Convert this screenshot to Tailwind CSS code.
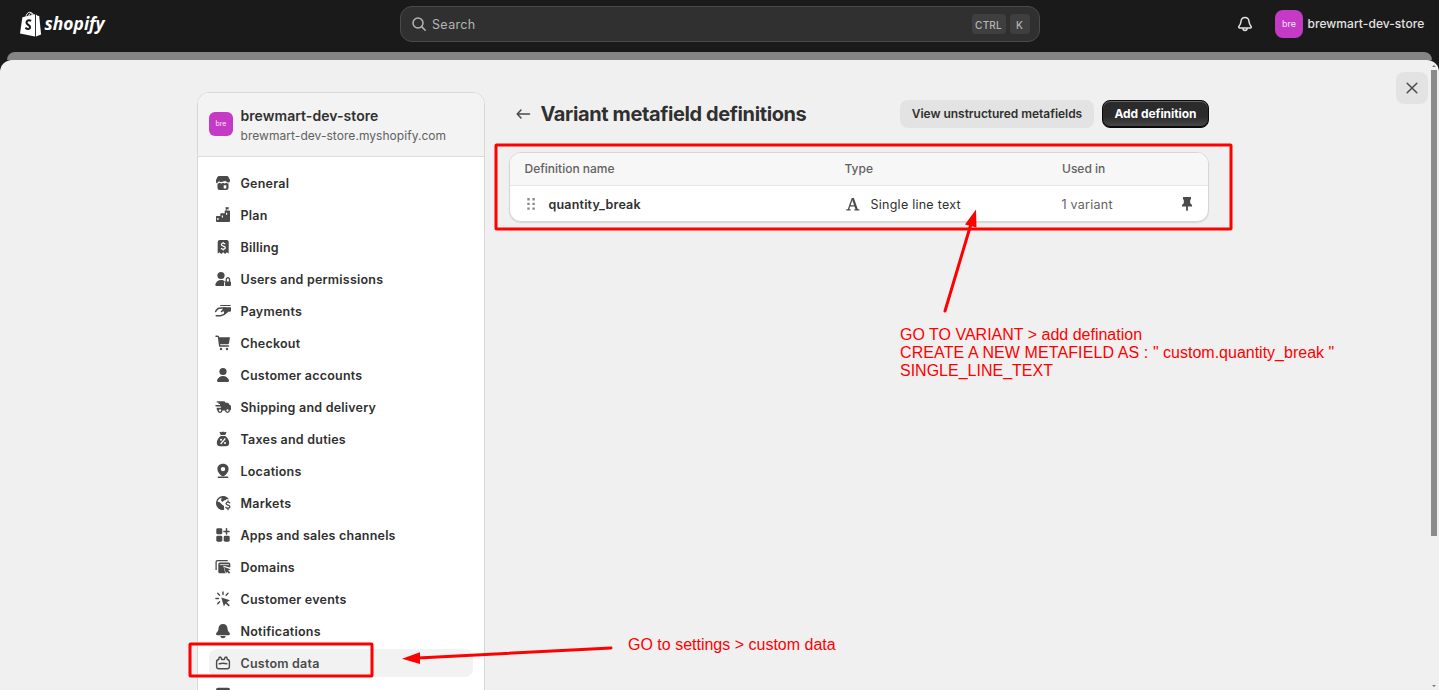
<!DOCTYPE html>
<html lang="en">
<head>
<meta charset="utf-8">
<title>Settings</title>
<script src="https://cdn.jsdelivr.net/npm/@tailwindcss/browser@4"></script>
</head>
<body class="relative flex h-[690px] w-[1439px] flex-col overflow-hidden bg-[#1a1a1a] font-['Inter',sans-serif] text-[13px] text-[#303030]">

<header class="flex h-[52px] shrink-0 items-center justify-between pt-0 pr-[15px] pb-1 pl-5">
  <svg class="h-[26px] w-[90px] overflow-visible" viewBox="0 0 90 26">
    <path fill="#fff" d="M2.400 6.300 15 3.200v22.400L0 22.600zM15.900 3.300l1.600 1.500 1.700.2 1.900 18.600-5.200 1.900z"/>
    <path d="M5.800 6.800C6 3.600 7.700 1.200 9.700 1.200c1.700 0 2.700 2 2.700 4.700M8.400 5.800C9 3.200 10.400 1.700 11.600 1.900c1.100.2 1.800 1.500 2 3.200" fill="none" stroke="#fff" stroke-width="1"/>
    <path d="M11.100 9.800c-2.400-1.200-4.600-.2-4.600 1.700 0 2.400 3.600 2.400 3.600 4.800 0 1.900-2.400 2.200-4.700.6" fill="none" stroke="#1a1a1a" stroke-width="2.100"/>
    <text x="24.600" y="19" textLength="60" lengthAdjust="spacingAndGlyphs" fill="#fff" font-family="Open Sans" font-size="18.500" font-style="italic" font-weight="700">shopify</text>
  </svg>
  <div class="ml-[92px] flex h-9 w-[640px] items-center rounded-xl border border-[#4a4a4a] bg-[#303030] pr-[9px] pl-[11px] text-[#b5b5b5]">
    <svg class="mr-[6.5px] size-[14px]" viewBox="0 0 14 14" fill="none" stroke="#b5b5b5" stroke-width="1.500"><circle cx="6" cy="6" r="5"/><path d="m9.600 9.600 3.600 3.600" stroke-linecap="round"/></svg>
    <span class="flex-1 pt-[3px] text-[12.5px] tracking-[0.350px]">Search</span>
    <kbd class="mr-1 flex h-5 w-[34px] items-center justify-center rounded bg-[#3f3f3f] pt-[2px] font-['Inter',sans-serif] text-[10px] font-medium tracking-[0.200px]">CTRL</kbd>
    <kbd class="flex h-5 w-5 items-center justify-center rounded bg-[#3f3f3f] pt-[2px] font-['Inter',sans-serif] text-[10px] font-medium">K</kbd>
  </div>
  <div class="flex items-center">
    <svg class="mr-[22px] size-4" viewBox="0 0 16 16" fill="none" stroke="#e3e3e3" stroke-width="1.500" stroke-linejoin="round"><path d="M8 1.500C5.500 1.500 4.200 3.200 4 5.500 3.800 8 3.300 8.600 2 10.200c-.6.9-.2 1.700.7 1.700h10.600c.9 0 1.300-.8.7-1.700C12.700 8.600 12.200 8 12 5.500 11.800 3.200 10.500 1.500 8 1.500z"/><path d="M5.900 12c0 3.300 4.200 3.300 4.200 0"/></svg>
    <span class="mr-[4.5px] flex size-7 items-center justify-center rounded-lg bg-[#c53ac5] text-[9px] text-[#f8e3f8]">bre</span>
    <span class="w-[116.500px] text-[12px] font-medium whitespace-nowrap tracking-[0.060px] text-[#e3e3e3]">brewmart-dev-store</span>
  </div>
</header>
<div class="mx-[7px] h-2 shrink-0 rounded-t-[10px] bg-[#858585]"></div>

<div class="flex flex-1 overflow-hidden rounded-t-xl bg-[#f0f0f0] pl-[197px]">
  <aside class="mt-8 h-[700px] w-[288px] shrink-0 overflow-hidden rounded-t-xl border border-[#d8d8d8] bg-white">
    <div class="flex h-16 items-center border-b border-[#dcdcdc] bg-[#f3f3f3] pl-[11px]">
      <span class="mr-[7.5px] mb-[2px] flex size-6 items-center justify-center rounded-md bg-[#c53ac5] pt-[2px] text-[7px] text-[#f8e3f8]">bre</span>
      <div class="pt-[1px]">
        <div class="text-[14px] leading-5 font-semibold tracking-[0.050px]">brewmart-dev-store</div>
        <div class="relative top-[1px] text-[12px] leading-[18px] tracking-[0.050px] text-[#616161]">brewmart-dev-store.myshopify.com</div>
      </div>
    </div>
    <nav class="flex flex-col gap-1 px-[11px] pt-3 text-[12.5px] font-semibold tracking-[0.220px] text-[#303030] [&_span]:pt-[3px]">
      <a class="flex h-7 items-center gap-[9.5px] pl-[6px]"><svg class="size-4" viewBox="0 0 16 16" fill="#4a4a4a"><path d="M4 1h8q1 0 1.500 1L15 5v1q0 1.500-1.700 1.500T11.300 6.500 8 6.500 4.700 6.500 2.700 7.500 1 6V5l1.500-3Q3 1 4 1z"/><path fill-rule="evenodd" d="M2.500 8.500q1.300.2 2.300-.7 1.600 1.300 3.200 0 1.600 1.300 3.200 0 1 .9 2.300.7V13q0 2-2 2h-7q-2 0-2-2zM8.700 10.300V13.500h2.600V10.300z"/></svg><span>General</span></a>
      <a class="flex h-7 items-center gap-[9.5px] pl-[6px]"><svg class="size-4" viewBox="0 0 16 16" fill="#4a4a4a"><path fill-rule="evenodd" d="M1 9.700q0-.7.700-.7H5.300V7q0-.7.700-.7H9.700V4.200q0-.7.700-.7H14.300q.7 0 .7.700V14q0 1-1 1H2q-1 0-1-1zM2.300 11v2h1.200v-2zM6.800 8.500v2H8v-2zM11 5.700v2h1.200v-2z"/><path d="M10.200.3h3.900l-.7 1 .7 1h-2.400v1.500h-1V1.300z"/></svg><span>Plan</span></a>
      <a class="flex h-7 items-center gap-[9.5px] pl-[6px]"><svg class="size-4" viewBox="0 0 16 16"><path fill="#4a4a4a" d="M4.700 1h7q2 0 2 2v11.800L11.900 13.300 10.200 15 8.200 13.300 6.200 15 4.500 13.300 2.700 14.800V3q0-2 2-2z"/><path fill="none" stroke="#fff" stroke-width="1.200" d="M10.200 5.300C9.500 3.800 6.300 3.900 6.300 5.600c0 2 4 1 4 3.100 0 1.800-3.500 1.900-4.200.2M8.200 2.900v1.500M8.200 10v1.500"/></svg><span>Billing</span></a>
      <a class="flex h-7 items-center gap-[9.5px] pl-[6px]"><svg class="size-4" viewBox="0 0 16 16" fill="#4a4a4a"><circle cx="6" cy="4.500" r="3.600"/><path d="M6 9c2 0 3.300.6 4 1.500-.7.500-.9 1-.9 2V15H1.500C.5 15 0 14.200.5 13 1.500 10.500 3.200 9 6 9z"/><path fill-rule="evenodd" d="M10.100 10.500h.5V8.700C10.600 5 15.200 5 15.200 8.700v1.800q.8 0 .8.900V14q0 1-1 1h-4q-1 0-1-1zM11.900 10.500h2V8.700c0-1.700-2-1.700-2 0z"/></svg><span>Users and permissions</span></a>
      <a class="flex h-7 items-center gap-[9.5px] pl-[6px]"><svg class="size-4" viewBox="0 0 16 16" fill="#4a4a4a"><path d="M6 2h8.500q1.400 0 1.500 1H4.800Q5.200 2 6 2zM8.200 4.300H16V7.500q0 1.300-1.300 1.300h-1.500L9 11.800V8.500H7.600z"/><path d="M.6 8.500C2.500 5.200 3.500 5 6.500 5H10L6.500 8.500M1.200 12.700h4.300c3 0 4-1.200 6.700-4" fill="none" stroke="#4a4a4a" stroke-width="1.500" stroke-linecap="round" stroke-linejoin="round"/></svg><span>Payments</span></a>
      <a class="flex h-7 items-center gap-[9.5px] pl-[6px]"><svg class="size-4" viewBox="0 0 16 16" fill="#4a4a4a"><path d="M1 1.200h1.500q1 0 1.100 1L4.700 11h8.800" fill="none" stroke="#4a4a4a" stroke-width="1.400" stroke-linecap="round"/><path d="M3.600 2.300H15L14 8.200q-.2 1-1.200 1H4.500z"/><circle cx="6" cy="14" r="1.200"/><circle cx="12" cy="14" r="1.200"/></svg><span>Checkout</span></a>
      <a class="flex h-7 items-center gap-[9.5px] pl-[6px]"><svg class="size-4" viewBox="0 0 16 16" fill="#4a4a4a"><circle cx="8" cy="4.500" r="3.600"/><path d="M8 9c3 0 5 1.700 5.900 4 .4 1.200-.2 2-1.200 2H3.300c-1 0-1.600-.8-1.200-2C3 10.700 5 9 8 9z"/></svg><span>Customer accounts</span></a>
      <a class="flex h-7 items-center gap-[9.5px] pl-[6px]"><svg class="size-4" viewBox="0 0 16 16" fill="#4a4a4a"><path d="M2.300 2.200H9q1.500 0 1.500 1.500h1.700q1.200 0 1.700 1l.5 1 .9.500q.7.300.7 1.300V10q0 1.500-1.500 1.500L3 11.500q-1.300 0-1.300-1.500V8.800h4.200V7.500H1Q.3 7.500.3 6.800T1 6.100H5V4.900H3.500V3.600H2.300q-.7 0-.7-.7t.7-.7z"/><circle cx="5" cy="11.500" r="1.800" fill="#fff" stroke="#4a4a4a" stroke-width="1.300"/><circle cx="12.500" cy="11.500" r="1.800" fill="#fff" stroke="#4a4a4a" stroke-width="1.300"/></svg><span>Shipping and delivery</span></a>
      <a class="flex h-7 items-center gap-[9.5px] pl-[6px]"><svg class="size-4" viewBox="0 0 16 16"><path fill="#4a4a4a" d="M5 .7l1.500.5L8 .6l1.500.6L11 .7q.7.300.3 1.100L10.300 4H5.700L4.700 1.800Q4.300 1 5 .7zM5.700 5h4.600c2 1.500 3.900 4 3.900 6.800q0 3.500-3.500 3.500H5.300q-3.500 0-3.500-3.500C1.800 9 3.700 6.500 5.700 5z"/><path d="m5.700 13 4.600-5.500" stroke="#fff" stroke-width="1.200"/><circle cx="6" cy="8.800" r="1" fill="#fff"/><circle cx="10" cy="12" r="1" fill="#fff"/></svg><span>Taxes and duties</span></a>
      <a class="flex h-7 items-center gap-[9.5px] pl-[6px]"><svg class="size-4" viewBox="0 0 16 16" fill="#4a4a4a"><path fill-rule="evenodd" d="M8 .7c3.300 0 5.600 2.200 5.600 5.200 0 3-2.300 5.500-4.500 7.100q-1.100.7-2.200 0C4.700 11.400 2.400 9 2.400 5.900 2.400 2.900 4.700.7 8 .7zM8 3.900a2.200 2.200 0 1 0 0 4.400 2.200 2.200 0 0 0 0-4.400z"/><path d="M3.300 14.200h9.400" stroke="#4a4a4a" stroke-width="1.400" stroke-linecap="round"/></svg><span>Locations</span></a>
      <a class="flex h-7 items-center gap-[9.5px] pl-[6px]"><svg class="size-4" viewBox="0 0 16 16"><circle cx="8" cy="8" r="6.300" fill="none" stroke="#4a4a4a" stroke-width="1.400"/><path fill="#4a4a4a" d="M1.500 6.500 4.500 7l2.500 2.500L9 11v2.500L8 15C4 15 1 12 1.500 6.500zM7 1.500 9.500 1.300 12.500 3 11 5 9 5.500 7.500 7 6 5.500z"/><path fill="#fff" d="M9.500 7.500 12 4.300h4V16H9z"/><path fill="none" stroke="#4a4a4a" stroke-width="1.300" stroke-linecap="round" d="M14.700 7.900c-.9-1.200-3.600-.9-3.600.7 0 2 3.800 1 3.800 3.100 0 1.800-3 2-4 .6M13 5.800v1.300M13 13.300v1.400"/></svg><span>Markets</span></a>
      <a class="flex h-7 items-center gap-[9.5px] pl-[6px]"><svg class="size-4" viewBox="0 0 16 16" fill="#4a4a4a"><rect x="1.300" y="1.300" width="6" height="6" rx="1.400"/><rect x="1.300" y="8.700" width="6" height="6" rx="1.400"/><rect x="8.700" y="8.700" width="6" height="6" rx="1.400"/><path d="M11.500 1.800v5.200M8.900 4.400h5.200" stroke="#4a4a4a" stroke-width="1.500" stroke-linecap="round"/></svg><span>Apps and sales channels</span></a>
      <a class="flex h-7 items-center gap-[9.5px] pl-[6px]"><svg class="size-4" viewBox="0 0 16 16" fill="#4a4a4a"><path d="M1.100 11V3Q1.100 1.600 2.500 1.600H12.800" fill="none" stroke="#4a4a4a" stroke-width="1.300"/><path d="M3.300 5q0-1.500 1.500-1.500h9q1.500 0 1.500 1.500v3.500L8.300 6.800l2 7.400H4.800q-1.500 0-1.500-1.500z"/><path fill="#fff" d="M4.800 5.300H14v.8H4.800z"/><path d="M9 8l6.500 2.200-2.300 1.300 2 2-1.200 1.200-2-2-1 2z"/></svg><span>Domains</span></a>
      <a class="flex h-7 items-center gap-[9.5px] pl-[6px]"><svg class="size-4" viewBox="0 0 16 16" fill="#4a4a4a"><path d="M6.300 6.500l8.700 2.800-3.200 1.900 3 3-1.200 1.200-3-3-1.700 3z"/><path d="M8 .9v2.600M.9 7.500h2.600M2.700 2.300l1.900 1.900M13 2.300l-1.900 1.900M2.700 12.700l1.900-1.900" stroke="#4a4a4a" stroke-width="1.400" stroke-linecap="round"/></svg><span>Customer events</span></a>
      <a class="flex h-7 items-center gap-[9.5px] pl-[6px]"><svg class="size-4" viewBox="0 0 16 16" fill="#4a4a4a"><path d="M8 1c2.800 0 4.400 2 4.500 4.500.1 2 .8 3 2 4.200 1 1.200.3 2.600-1 2.600h-11c-1.300 0-2-1.400-1-2.600 1.200-1.200 1.900-2.200 2-4.200C3.600 3 5.200 1 8 1zM5.300 12.900h5.400C10.300 15.900 5.700 15.900 5.300 12.900z"/></svg><span>Notifications</span></a>
      <a class="flex h-7 items-center gap-[9.5px] rounded-lg bg-[#f2f2f2] pl-[6px] text-[#4a4a4a]"><svg class="size-4" viewBox="0 0 16 16" fill="none" stroke="#4a4a4a" stroke-width="1.400" stroke-linejoin="round" stroke-linecap="round"><path d="M3.700 4.500 4.200 2.200h1.700L6.700 4.500h2.600l.8-2.300h1.700l.5 2.300q2.100.3 2.100 2.300v4.600q0 2.300-2.300 2.300H3.900q-2.300 0-2.300-2.300V6.800q0-2 2.100-2.300zM4.200 8.800q3.800-1 7.600 0"/></svg><span>Custom data</span></a>
      <a class="flex h-7 items-center gap-[9.5px] pl-[6px]"><svg class="size-4" viewBox="0 0 16 16" fill="#4a4a4a"><rect x="1" y=".8" width="14" height="13" rx="2"/></svg></a>
    </nav>
  </aside>

  <main class="ml-6 flex w-[700px] shrink-0 flex-col pt-10">
    <div class="flex h-7 items-center">
      <svg class="mr-[9.5px] ml-[7px] h-[14px] w-[15px]" viewBox="0 0 15 14" fill="none" stroke="#4a4a4a" stroke-width="1.500" stroke-linecap="round" stroke-linejoin="round"><path d="M13.500 7H1.200M5 3 1.200 7 5 11"/></svg>
      <h1 class="flex-1 text-[20px] font-bold tracking-[-0.390px] whitespace-nowrap">Variant metafield definitions</h1>
      <button class="mr-2 h-7 w-[194px] rounded-lg bg-[#e3e3e3] text-[12px] font-semibold tracking-[-0.040px] whitespace-nowrap">View unstructured metafields</button>
      <button class="h-7 w-[107px] rounded-lg border border-[#0a0a0a] bg-linear-to-b from-[#2b2b2b] from-60% to-[#4a4a4a] text-[12px] font-bold tracking-[-0.040px] whitespace-nowrap text-white shadow-[inset_0_1px_0_#666,inset_0_-1px_0_#0a0a0a]">Add definition</button>
    </div>
    <div class="mt-6 h-[70px] overflow-hidden rounded-xl border border-[#d6d6d6] bg-white shadow-[0_1px_1px_#d8d8d8]">
      <div class="flex h-[33px] items-center border-b border-[#e6e6e6] bg-[#f7f7f7] pl-[14.5px] text-[12px] font-medium text-[#616161]">
        <span class="w-[320px]">Definition name</span><span class="w-[217.500px]">Type</span><span>Used in</span>
      </div>
      <div class="flex h-[36px] items-center pl-[17px] text-[12.5px] [&_span]:pt-[3px]">
        <svg class="mr-[12.5px] h-3 w-[9px]" viewBox="0 0 9 12" fill="#8a8a8a"><path d="M.3 0h2.400v2.400H.3zM5.400 0h2.400v2.400H5.400zM.3 4.700h2.400v2.400H.3zM5.400 4.700h2.400v2.400H5.400zM.3 9.400h2.400v2.400H.3zM5.400 9.400h2.400v2.400H5.400z"/></svg>
        <span class="w-[297px] font-semibold tracking-[0.190px]">quantity_break</span>
        <svg class="mr-[10px] h-4 w-[15px]" viewBox="0 0 15 16" fill="none" stroke="#4a4a4a"><path stroke-width="1.300" d="M.3 13.900h4.400M8.300 13.900h5M2.300 13.700 6.300 2.500M4 9.900h5.400"/><path stroke-width="2.200" d="M6.700 2 10.900 13.900"/></svg>
        <span class="w-[191px] tracking-[0.250px]">Single line text</span>
        <span class="w-[119px] tracking-[0.250px] text-[#616161]">1 variant</span>
        <svg class="h-4 w-3" viewBox="0 0 12 16" fill="#4a4a4a"><path d="M2 1h8v2q0 .8-.8.8v3.400q2 .8 2 3.300H6.900V14L6 15.500 5.100 14v-3.500H.8q0-2.500 2-3.300V3.800Q2 3.800 2 3z"/></svg>
      </div>
    </div>
  </main>
</div>

<!-- Close button and scrollbar float over the settings sheet -->
<button class="absolute top-[72px] left-[1396px] flex size-8 items-center justify-center rounded-lg bg-[#e3e3e3]"><svg class="size-3" viewBox="0 0 12 12" fill="none" stroke="#4a4a4a" stroke-width="1.500" stroke-linecap="round"><path d="m1.200 1.200 9.600 9.600M10.800 1.200 1.200 10.800"/></svg></button>
<div class="absolute top-[70px] left-[1431px] h-[466px] w-[6px] bg-[#8a8a8a]"></div>
<svg class="absolute top-[64px] left-[1431px] h-[626px] w-[6px]" viewBox="0 0 6 626" fill="#777"><path d="M1 3 3 1l2 2zM1 621l2 2 2-2z"/></svg>

<!-- Annotations drawn over the page -->
<svg class="absolute inset-0" width="1439" height="690" viewBox="0 0 1439 690" fill="none" stroke="#f00" stroke-width="3">
  <rect x="496" y="145" width="735" height="84" rx=".5"/>
  <rect x="190" y="644" width="182" height="32" rx=".5"/>
  <path d="M945 311 971 224M611 648 418 658" stroke-linecap="round"/>
  <path fill="#f00" stroke="none" d="M976 209.500 965 224.500 976.500 227.500zM402 658.700 420 652.300V664z"/>
</svg>
<div class="absolute top-[326px] left-[900px] font-['Liberation_Sans',sans-serif] text-[16px] leading-[18px] whitespace-nowrap text-[#f00]">GO TO VARIANT &gt; add defination<br><span class="tracking-[0.100px]">CREATE A NEW METAFIELD AS : </span>" custom.quantity_break "<br>SINGLE_LINE_TEXT</div>
<div class="absolute top-[636px] left-[628px] font-['Liberation_Sans',sans-serif] text-[16px] leading-[18px] whitespace-nowrap text-[#f00]">GO to settings &gt; custom data</div>
</body>
</html>
